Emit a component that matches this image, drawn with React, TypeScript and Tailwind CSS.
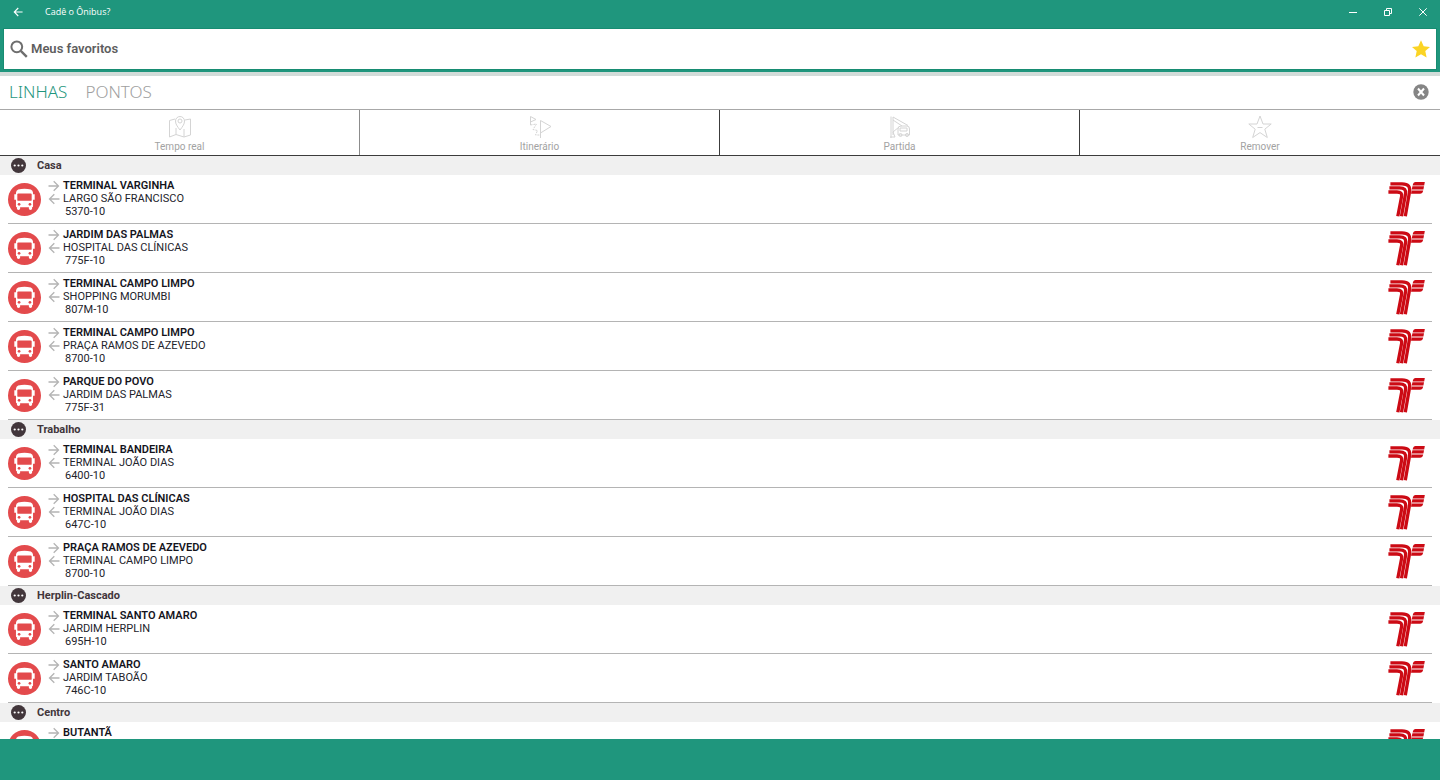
import { useState } from 'react';
import type { ReactNode } from 'react';

interface BusLine {
  to: string;
  from: string;
  code: string;
}

interface Group {
  name: string;
  lines: BusLine[];
}

const groups: Group[] = [
  {
    name: 'Casa',
    lines: [
      { to: 'TERMINAL VARGINHA', from: 'LARGO SÃO FRANCISCO', code: '5370-10' },
      { to: 'JARDIM DAS PALMAS', from: 'HOSPITAL DAS CLÍNICAS', code: '775F-10' },
      { to: 'TERMINAL CAMPO LIMPO', from: 'SHOPPING MORUMBI', code: '807M-10' },
      { to: 'TERMINAL CAMPO LIMPO', from: 'PRAÇA RAMOS DE AZEVEDO', code: '8700-10' },
      { to: 'PARQUE DO POVO', from: 'JARDIM DAS PALMAS', code: '775F-31' },
    ],
  },
  {
    name: 'Trabalho',
    lines: [
      { to: 'TERMINAL BANDEIRA', from: 'TERMINAL JOÃO DIAS', code: '6400-10' },
      { to: 'HOSPITAL DAS CLÍNICAS', from: 'TERMINAL JOÃO DIAS', code: '647C-10' },
      { to: 'PRAÇA RAMOS DE AZEVEDO', from: 'TERMINAL CAMPO LIMPO', code: '8700-10' },
    ],
  },
  {
    name: 'Herplin-Cascado',
    lines: [
      { to: 'TERMINAL SANTO AMARO', from: 'JARDIM HERPLIN', code: '695H-10' },
      { to: 'SANTO AMARO', from: 'JARDIM TABOÃO', code: '746C-10' },
    ],
  },
  {
    name: 'Centro',
    lines: [{ to: 'BUTANTÃ', from: '', code: '' }],
  },
];

function Arrow({ left = false, className }: { left?: boolean; className: string }) {
  return (
    <svg viewBox="0 0 12 12" className={className} fill="none" stroke="currentColor" strokeWidth="1.3" aria-hidden="true">
      <path d={left ? 'M11.5 6H1.5M6.3 1.2L1.5 6l4.8 4.8' : 'M.5 6H10.5M5.7 1.2l4.8 4.8-4.8 4.8'} />
    </svg>
  );
}

function BusIcon() {
  return (
    <svg viewBox="0 0 34 34" className="size-[33px] shrink-0" aria-hidden="true">
      <circle cx="17" cy="17" r="17" fill="#e34a4c" />
      <path
        fill="#fff"
        d="M10.5 6.8Q17 5 23.5 6.8Q25.6 7.6 25.8 10V11.5H27.5V17.3H25.8V24Q25.8 25 24.8 25V26.5Q24.8 27.7 23.2 27.7Q21.5 27.7 21.5 26.5V25H12.5V26.5Q12.5 27.7 10.8 27.7Q9.2 27.7 9.2 26.5V25Q8.2 25 8.2 24V17.3H6.5V11.5H8.2V10Q8.4 7.6 10.5 6.8Z"
      />
      <rect x="9.6" y="10.8" width="14.8" height="7.6" rx="1" fill="#e34a4c" />
      <circle cx="11.4" cy="22" r="1.4" fill="#e34a4c" />
      <circle cx="22.6" cy="22" r="1.4" fill="#e34a4c" />
    </svg>
  );
}

function OperatorLogo() {
  return (
    <svg viewBox="0 0 37 36" className="h-9 w-[37px] shrink-0" fill="none" stroke="#cc0a14" aria-hidden="true">
      <g strokeWidth="3.3">
        <path d="M2.4 2.8H14C20.5 2.8 22.4 6 21.5 11L17.3 35.2" />
        <path d="M1.4 6.9H11.5C16.5 6.9 18.2 9 17.5 13L13.5 35.2" />
        <path d="M.4 11H9C12.8 11 14.2 12.5 13.6 15.5L9.8 35.2" />
      </g>
      <g fill="#cc0a14" stroke="none">
        <path d="M27.5 1.1H36.8L36.2 4.4H24.6Q25.5 1.1 27.5 1.1Z" />
        <path d="M24.4 5.3H36L35.4 8.6H23.8Z" />
        <path d="M23.6 9.5H35.2Q34.5 12.7 32 12.7H23Z" />
      </g>
    </svg>
  );
}

const MapIcon = () => (
  <svg viewBox="0 0 24 24" className="size-6" fill="none" stroke="currentColor" aria-hidden="true">
    <path d="M7 4L1.5 5.5V22L8 19.5L16 22L22.5 20V4L17 5" />
    <path d="M8 13V19.5M16 14V22M12 15C9 11 7.5 9 7.5 6a4.5 4.5 0 0 1 9 0C16.5 9 15 11 12 15Z" />
    <circle cx="12" cy="6" r="2" />
  </svg>
);

const RouteIcon = () => (
  <svg viewBox="0 0 24 24" className="size-6" fill="none" stroke="currentColor" aria-hidden="true">
    <path d="M2.5 10V1.5L8 4.5L2.5 7M12.5 23V5.5L23 11.5L12.5 18" />
    <path d="M2.5 10L8.5 9L5 14.5L9.5 15.5L7.5 20H12.5" strokeDasharray="2 1" />
  </svg>
);

const DepartIcon = () => (
  <svg viewBox="0 0 24 24" className="size-6" fill="none" stroke="currentColor" aria-hidden="true">
    <path d="M3 23V1.5M5 2L20 10.5M5 2V20M5 5L14 11M2 22H7L5 17L11 12" />
    <path d="M10 19V14Q10 11 13 11H19Q21.5 11 21.5 14V20H10ZM12 13H19V16H12Z" />
    <circle cx="12.5" cy="20" r="1.5" />
    <circle cx="19" cy="20" r="1.5" />
  </svg>
);

const RemoveIcon = () => (
  <svg viewBox="0 0 24 24" className="size-6" fill="none" stroke="currentColor" aria-hidden="true">
    <path d="M12 1L15 9H23.2L16.8 14.2L19.3 22.5L12 17.6L4.7 22.5L7.2 14.2L.8 9H9Z" />
    <path d="M9.5 12.5H14.5" />
  </svg>
);

const actions: { label: string; icon: ReactNode; border: string }[] = [
  { label: 'Tempo real', icon: <MapIcon />, border: 'border-r border-[#8c8c8c]' },
  { label: 'Itinerário', icon: <RouteIcon />, border: 'border-r border-[#3c3c3c]' },
  { label: 'Partida', icon: <DepartIcon />, border: 'border-r border-[#3c3c3c]' },
  { label: 'Remover', icon: <RemoveIcon />, border: '' },
];

function TitleBar() {
  return (
    <header className="flex h-6 items-center text-white">
      <button aria-label="Voltar" className="flex w-9 justify-center">
        <Arrow left className="size-[10px]" />
      </button>
      <h1 className="ml-[9px] flex-1 font-['Open_Sans',sans-serif] text-[9px] leading-3">Cadê o Ônibus?</h1>
      <button aria-label="Minimizar" className="flex w-[35px] justify-center">
        <svg viewBox="0 0 8 8" className="size-2" stroke="currentColor"><path d="M0 4.5H8" /></svg>
      </button>
      <button aria-label="Restaurar" className="flex w-[35px] justify-center">
        <svg viewBox="0 0 8 8" className="size-2" fill="none" stroke="currentColor"><path d="M.5 2.5H5.5V7.5H.5ZM2.5 2.5V.5H7.5V5.5H5.5" /></svg>
      </button>
      <button aria-label="Fechar" className="flex w-[35px] justify-center">
        <svg viewBox="0 0 8 8" className="size-2" stroke="currentColor"><path d="M.3.3L7.7 7.7M7.7.3L.3 7.7" /></svg>
      </button>
    </header>
  );
}

function LineRow({ line }: { line: BusLine }) {
  return (
    <li className="mx-2 flex h-[49px] items-center border-b border-[#b4b4b4]">
      <BusIcon />
      <a href="#" className="ml-[7px] flex-1 pb-px text-[11px] leading-[13px] text-[#23232b]">
        <span className="flex h-[13px] items-center gap-[3px] font-semibold text-[#14141c]">
          <Arrow className="size-3 text-[#b4b4b4]" />
          {line.to}
        </span>
        <span className="flex h-[13px] items-center gap-[3px]">
          <Arrow left className="size-3 text-[#b4b4b4]" />
          {line.from}
        </span>
        <span className="ml-[17px] block h-[13px]">{line.code}</span>
      </a>
      <span className="mr-[7px]">
        <OperatorLogo />
      </span>
    </li>
  );
}

export default function App() {
  const [tab, setTab] = useState('LINHAS');
  const [search, setSearch] = useState('Meus favoritos');

  return (
    <div className="flex h-screen flex-col overflow-hidden bg-[#1f967d] font-['Roboto',sans-serif]">
      <TitleBar />

      <div className="px-1 pt-[5px] pb-[3px]">
        <div className="flex h-10 items-center bg-white px-1.5 outline outline-[#178c72]">
          <label htmlFor="search" aria-label="Buscar">
            <svg viewBox="0 0 18 18" className="size-[18px]" fill="none" stroke="#6e6e6e" strokeWidth="2">
              <circle cx="6.8" cy="6.8" r="5.4" />
              <path d="M10.8 10.8L16.8 16.8" strokeWidth="2.4" />
            </svg>
          </label>
          <input
            id="search"
            value={search}
            onChange={(e) => setSearch(e.target.value)}
            className="ml-[3px] min-w-0 flex-1 text-[13px] leading-5 font-semibold text-[#5e5e5e] outline-none"
          />
          <button aria-label="Favoritos">
            <svg viewBox="0 0 18 18" className="size-[18px]" fill="#fbd424">
              <path d="M9 .3L11.7 6.2L18 6.9L13.3 11.1L14.6 17.5L9 14.3L3.4 17.5L4.7 11.1L0 6.9L6.3 6.2Z" />
            </svg>
          </button>
        </div>
      </div>

      <main className="flex min-h-0 flex-1 flex-col border-t-4 border-t-[#d2dcd9] bg-white">
        <div className="flex h-[34px] shrink-0 items-center gap-[18px] border-b border-[#a8a8a8] pr-[11px] pb-px pl-[9px]">
          {['LINHAS', 'PONTOS'].map((name) => (
            <button
              key={name}
              onClick={() => setTab(name)}
              className={`font-['Noto_Sans','Open_Sans',sans-serif] text-[17px] leading-6 font-light ${tab === name ? 'text-[#1f967d]' : 'text-[#a0a0a0]'}`}
            >
              {name}
            </button>
          ))}
          <button aria-label="Fechar" className="ml-auto">
            <svg viewBox="0 0 16 16" className="size-4">
              <circle cx="8" cy="8" r="7.7" fill="#858585" />
              <path d="M5 4.5L11 11.5M11 4.5L5 11.5" stroke="#fff" strokeWidth="2" />
            </svg>
          </button>
        </div>

        <nav className="grid h-[46px] shrink-0 grid-cols-4 border-b border-[#3c3c3c]">
          {actions.map((action) => (
            <button key={action.label} className={`flex flex-col items-center pt-[5px] text-[#d4d4d4] ${action.border}`}>
              {action.icon}
              <span className="text-[10px] leading-4 text-[#a2a2a2]">{action.label}</span>
            </button>
          ))}
        </nav>

        <div className="min-h-0 flex-1 overflow-hidden">
          {groups.map((group) => (
            <section key={group.name}>
              <div className="flex h-[19px] items-center gap-[11px] bg-[#f0f0f0] pl-[11px]">
                <button aria-label={`Opções de ${group.name}`}>
                  <svg viewBox="0 0 15 15" className="size-[15px]">
                    <circle cx="7.5" cy="7.5" r="7.5" fill="#42363b" />
                    <g fill="#fff">
                      <circle cx="3.7" cy="7.5" r="1.1" />
                      <circle cx="7.5" cy="7.5" r="1.1" />
                      <circle cx="11.3" cy="7.5" r="1.1" />
                    </g>
                  </svg>
                </button>
                <h2 className="text-[11px] leading-4 font-bold text-[#42363b]">{group.name}</h2>
              </div>
              <ul>
                {group.lines.map((line) => (
                  <LineRow key={line.to + line.code} line={line} />
                ))}
              </ul>
            </section>
          ))}
        </div>
      </main>

      <footer className="h-[41px] shrink-0" />
    </div>
  );
}
